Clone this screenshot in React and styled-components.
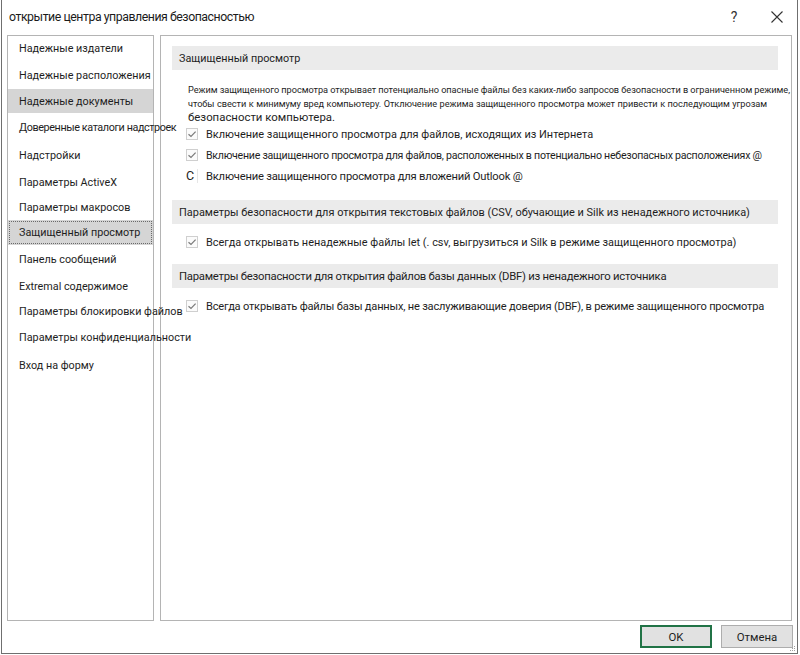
import React from "react";
import styled, { createGlobalStyle } from "styled-components";

const Global = createGlobalStyle`
  html, body { margin: 0; padding: 0; background: #ffffff; }
  body { font-family: Roboto, "Noto Sans", sans-serif; color: #1e1e1e; }
  * { box-sizing: border-box; }
`;

const Window = styled.div`
  margin-left: 1px;
  width: 797px;
  height: 654px;
  border: 1px solid #6f6f6f;
  border-top: none;
  background: #ffffff;
  display: flex;
  flex-direction: column;
  position: relative;
`;

const TitleBar = styled.div`
  height: 35px;
  display: flex;
  align-items: center;
  padding: 0 10px 2px 7px;
`;

const Title = styled.div`
  flex: 1;
  font-size: 12.3px;
  letter-spacing: -0.45px;
  color: #1b1b1b;
`;

const TitleButton = styled.div`
  width: ${(p) => p.$w}px;
  margin-left: ${(p) => p.$ml || 0}px;
  display: flex;
  align-items: center;
  justify-content: center;
  font-size: 14px;
  color: #333;
`;

const Body = styled.div`
  display: flex;
  gap: 6px;
  padding-left: 5px;
  height: 586px;
`;

const Sidebar = styled.div`
  width: 147px;
  border: 1px solid #b4b4b4;
  display: flex;
  flex-direction: column;
`;

const NavItem = styled.div`
  height: ${(p) => p.$h}px;
  flex: none;
  display: flex;
  align-items: center;
  padding-left: 11px;
  font-size: 10.8px;
  letter-spacing: ${(p) => p.$ls || 0}px;
  white-space: nowrap;
  color: #1e1e1e;
  background: ${(p) => (p.$selected ? "#d5d5d5" : "transparent")};
  outline: ${(p) => (p.$focus ? "1px dotted #6a6a6a" : "none")};
  outline-offset: -2px;
  position: relative;
  z-index: 1;
`;

const Main = styled.div`
  width: 632px;
  border: 1px solid #b4b4b4;
  padding: 10px 13px 0 11px;
`;

const SectionHeader = styled.div`
  height: 24px;
  display: flex;
  align-items: center;
  padding-left: 7px;
  background: #ebebeb;
  font-size: ${(p) => p.$fs || 10.8}px;
  letter-spacing: ${(p) => p.$ls || 0}px;
  color: #1e1e1e;
  white-space: nowrap;
  margin-top: ${(p) => p.$mt || 0}px;
`;

const Description = styled.div`
  padding: 13px 11px 0 16px;
  font-size: 9.2px;
  color: #1e1e1e;
`;

const JustLine = styled.div`
  height: 14px;
  line-height: 14px;
  text-align: justify;
  text-align-last: justify;
  white-space: nowrap;
  letter-spacing: -0.05px;
`;

const LastLine = styled.div`
  height: 13px;
  line-height: 13px;
  font-size: 11.4px;
`;

const Option = styled.div`
  height: ${(p) => p.$h || 21}px;
  display: flex;
  align-items: center;
  padding-left: 14px;
  margin-top: ${(p) => p.$mt || 0}px;
  white-space: nowrap;
`;

const Box = styled.span`
  width: 12px;
  height: 12px;
  border: 1px solid #cfcfcf;
  background: #fbfbfb;
  display: inline-flex;
  align-items: center;
  justify-content: center;
  margin-right: 8px;
  flex: none;
`;

const Letter = styled.span`
  width: 12px;
  margin-right: 8px;
  font-size: 12.5px;
  color: #222;
  border-right: 1px solid #e6e6e6;
  line-height: 14px;
  flex: none;
`;

const OptionText = styled.span`
  font-size: ${(p) => p.$fs || 10.9}px;
  letter-spacing: ${(p) => p.$ls || 0}px;
  color: #1e1e1e;
`;

const Footer = styled.div`
  display: flex;
  justify-content: flex-end;
  gap: 9px;
  padding: 4px 4px 0 0;
`;

const Button = styled.div`
  width: 72px;
  height: 23px;
  display: flex;
  align-items: center;
  justify-content: center;
  background: #e1e1e1;
  border: ${(p) => (p.$primary ? "2px solid #217346" : "1px solid #adadad")};
  font-size: 11.4px;
  color: #1e1e1e;
`;

const Grip = styled.svg`
  position: absolute;
  right: 1px;
  bottom: 1px;
`;

const Check = () => (
  <svg width="10" height="10" viewBox="0 0 10 10">
    <path d="M1.5 5.2 L4 7.5 L8.6 2.6" fill="none" stroke="#7a7a7a" strokeWidth="1.2" />
  </svg>
);

const navItems = [
  { t: "Надежные издатели", h: 25 },
  { t: "Надежные расположения", h: 28 },
  { t: "Надежные документы", h: 24, sel: true },
  { t: "Доверенные каталоги надстроек", h: 29, ls: -0.4 },
  { t: "Надстройки", h: 27 },
  { t: "Параметры ActiveX", h: 26 },
  { t: "Параметры макросов", h: 25 },
  { t: "Защищенный просмотр", h: 25, sel: true, focus: true },
  { t: "Панель сообщений", h: 29 },
  { t: "Extremal содержимое", h: 24 },
  { t: "Параметры блокировки файлов", h: 26 },
  { t: "Параметры конфиденциальности", h: 27 },
  { t: "Вход на форму", h: 28 },
];

export default function App() {
  return (
    <>
      <Global />
      <Window>
        <TitleBar>
          <Title>открытие центра управления безопасностью</Title>
          <TitleButton $w={24}>?</TitleButton>
          <TitleButton $w={20} $ml={21}>
            <svg width="12" height="12" viewBox="0 0 12 12">
              <path d="M0.5 0.5 L11.5 11.5 M11.5 0.5 L0.5 11.5" stroke="#333" strokeWidth="1.1" />
            </svg>
          </TitleButton>
        </TitleBar>
        <Body>
          <Sidebar>
            {navItems.map((n) => (
              <NavItem key={n.t} $h={n.h} $ls={n.ls} $selected={n.sel} $focus={n.focus}>
                {n.t}
              </NavItem>
            ))}
          </Sidebar>
          <Main>
            <SectionHeader>Защищенный просмотр</SectionHeader>
            <Description>
              <JustLine>
                Режим защищенного просмотра открывает потенциально опасные файлы без каких-либо запросов безопасности в ограниченном режиме,
              </JustLine>
              <JustLine>
                чтобы свести к минимуму вред компьютеру. Отключение режима защищенного просмотра может привести к последующим угрозам
              </JustLine>
              <LastLine>безопасности компьютера.</LastLine>
            </Description>
            <Option $h={20}>
              <Box><Check /></Box>
              <OptionText $fs={10.95}>Включение защищенного просмотра для файлов, исходящих из Интернета</OptionText>
            </Option>
            <Option $h={22}>
              <Box><Check /></Box>
              <OptionText $fs={10.6} $ls={-0.25}>
                Включение защищенного просмотра для файлов, расположенных в потенциально небезопасных расположениях @
              </OptionText>
            </Option>
            <Option $h={20}>
              <Letter>C</Letter>
              <OptionText $fs={11.2} $ls={-0.2}>Включение защищенного просмотра для вложений Outlook @</OptionText>
            </Option>
            <SectionHeader $mt={14} $fs={10.95}>
              Параметры безопасности для открытия текстовых файлов (CSV, обучающие и Silk из ненадежного источника)
            </SectionHeader>
            <Option $h={20} $mt={8}>
              <Box><Check /></Box>
              <OptionText $fs={10.95}>
                Всегда открывать ненадежные файлы let (. csv, выгрузиться и Silk в режиме защищенного просмотра)
              </OptionText>
            </Option>
            <SectionHeader $mt={12} $fs={11.3} $ls={-0.25}>
              Параметры безопасности для открытия файлов базы данных (DBF) из ненадежного источника
            </SectionHeader>
            <Option $h={20} $mt={8}>
              <Box><Check /></Box>
              <OptionText $fs={11.08} $ls={-0.2}>
                Всегда открывать файлы базы данных, не заслуживающие доверия (DBF), в режиме защищенного просмотра
              </OptionText>
            </Option>
          </Main>
        </Body>
        <Footer>
          <Button $primary>OK</Button>
          <Button>Отмена</Button>
        </Footer>
        <Grip width="6" height="6" viewBox="0 0 6 6">
          <rect x="4" y="0" width="1" height="1" fill="#a0a0a0" />
          <rect x="2" y="2" width="1" height="1" fill="#a0a0a0" />
          <rect x="4" y="2" width="1" height="1" fill="#a0a0a0" />
          <rect x="0" y="4" width="1" height="1" fill="#a0a0a0" />
          <rect x="2" y="4" width="1" height="1" fill="#a0a0a0" />
          <rect x="4" y="4" width="1" height="1" fill="#a0a0a0" />
        </Grip>
      </Window>
    </>
  );
}
